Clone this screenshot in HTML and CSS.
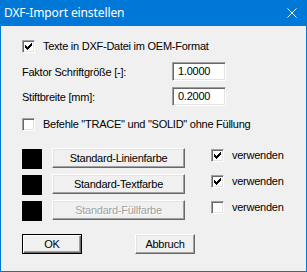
FILE: index.html
```html
<!DOCTYPE html>
<html>
<head>
<meta charset="utf-8">
<link rel="stylesheet" href="styles.css">
</head>
<body>
<div class="window">
  <div class="titlebar">
    <span class="title">DXF-Import einstellen</span>
    <svg class="close" width="10" height="10" viewBox="0 0 10 10"><path d="M0.5 0.5 L9.5 9.5 M9.5 0.5 L0.5 9.5" stroke="#fff" stroke-width="1" fill="none"/></svg>
  </div>
  <div class="body">
    <div class="check row-oem">
      <span class="box"><svg width="13" height="13" viewBox="0 0 13 13" shape-rendering="crispEdges"><path d="M3 5h1v3h-1z M4 6h1v3h-1z M5 7h1v3h-1z M6 6h1v3h-1z M7 5h1v3h-1z M8 4h1v3h-1z M9 3h1v3h-1z" fill="#000"/></svg></span>
      <span>Texte in DXF-Datei im OEM-Format</span>
    </div>
    <div class="field row-f1">
      <span class="label">Faktor Schriftgröße [-]:</span>
      <span class="input">1.0000</span>
    </div>
    <div class="field row-f2">
      <span class="label">Stiftbreite [mm]:</span>
      <span class="input">0.2000</span>
    </div>
    <div class="check row-trace">
      <span class="box"></span>
      <span>Befehle "TRACE" und "SOLID" ohne Füllung</span>
    </div>
    <div class="colors">
      <div class="color-row">
        <span class="swatch"></span>
        <span class="btn wide">Standard-Linienfarbe</span>
        <div class="check use">
          <span class="box"><svg width="13" height="13" viewBox="0 0 13 13" shape-rendering="crispEdges"><path d="M3 5h1v3h-1z M4 6h1v3h-1z M5 7h1v3h-1z M6 6h1v3h-1z M7 5h1v3h-1z M8 4h1v3h-1z M9 3h1v3h-1z" fill="#000"/></svg></span>
          <span>verwenden</span>
        </div>
      </div>
      <div class="color-row">
        <span class="swatch"></span>
        <span class="btn wide">Standard-Textfarbe</span>
        <div class="check use">
          <span class="box"><svg width="13" height="13" viewBox="0 0 13 13" shape-rendering="crispEdges"><path d="M3 5h1v3h-1z M4 6h1v3h-1z M5 7h1v3h-1z M6 6h1v3h-1z M7 5h1v3h-1z M8 4h1v3h-1z M9 3h1v3h-1z" fill="#000"/></svg></span>
          <span>verwenden</span>
        </div>
      </div>
      <div class="color-row">
        <span class="swatch"></span>
        <span class="btn wide disabled">Standard-Füllfarbe</span>
        <div class="check use">
          <span class="box"></span>
          <span>verwenden</span>
        </div>
      </div>
    </div>
    <div class="actions">
      <span class="btn small default">OK</span>
      <span class="btn small">Abbruch</span>
    </div>
  </div>
</div>
</body>
</html>
```
FILE: styles.css
```css
* { box-sizing: border-box; }
html, body { margin: 0; padding: 0; }
body {
  width: 307px;
  height: 272px;
  overflow: hidden;
  background: #f0f0f0;
  font-family: "Liberation Sans", Arial, sans-serif;
  font-size: 11px;
  letter-spacing: -0.25px;
  color: #000;
}
.window {
  width: 307px;
  height: 272px;
  border: 1px solid #0078d7;
  border-top: none;
  background: #f0f0f0;
  display: flex;
  flex-direction: column;
}
.titlebar {
  height: 26px;
  margin: 0 -1px;
  background: #0078d7;
  display: flex;
  align-items: center;
  justify-content: space-between;
  padding: 0 10px 0 4px;
  flex-shrink: 0;
}
.title {
  color: #fff;
  font-family: "Noto Sans", "Open Sans", sans-serif;
  font-size: 12px;
  letter-spacing: -0.1px;
  line-height: 26px;
}
.close { display: block; }
.body {
  padding-left: 21px;
  display: flex;
  flex-direction: column;
}
.check {
  display: flex;
  align-items: center;
  height: 13px;
  line-height: 13px;
  gap: 8px;
}
.box {
  width: 13px;
  height: 13px;
  flex-shrink: 0;
  background: #fff;
  border: 1px solid;
  border-color: #a0a0a0 #fff #fff #a0a0a0;
  box-shadow: inset 1px 1px #696969, inset -1px -1px #e3e3e3;
  position: relative;
}
.box svg {
  position: absolute;
  left: -1px;
  top: -1px;
}
.row-oem { margin-top: 14px; }
.field {
  display: flex;
  align-items: center;
  height: 19px;
}
.label { width: 150px; }
.input {
  width: 54px;
  height: 19px;
  background: #fff;
  border: 1px solid;
  border-color: #a0a0a0 #fff #fff #a0a0a0;
  box-shadow: inset 1px 1px #696969, inset -1px -1px #e3e3e3;
  padding-left: 5px;
  line-height: 17px;
}
.row-f1 { margin-top: 9px; }
.row-f2 { margin-top: 6px; }
.row-trace { margin-top: 12px; }
.colors {
  margin-top: 17px;
  display: flex;
  flex-direction: column;
  gap: 6px;
}
.color-row {
  display: flex;
  align-items: flex-start;
  height: 20px;
}
.swatch {
  width: 20px;
  height: 20px;
  margin-top: 1px;
  background: #000;
}
.btn {
  display: flex;
  align-items: center;
  justify-content: center;
  height: 20px;
  background: #f0f0f0;
  border: 1px solid;
  border-color: #fff #696969 #696969 #fff;
  box-shadow: inset -1px -1px #a0a0a0, inset 1px 1px #e3e3e3;
  padding-bottom: 1px;
}
.btn.wide {
  width: 133px;
  margin-left: 10px;
}
.btn.disabled {
  color: #a0a0a0;
  text-shadow: 1px 1px #fff;
}
.use {
  margin-left: 26px;
  margin-top: 1px;
}
.actions {
  margin-top: 14px;
  display: flex;
  gap: 53px;
}
.btn.small { width: 60px; }
.btn.default {
  border-color: #000;
  box-shadow: inset 1px 1px #fff, inset -1px -1px #696969, inset -2px -2px #a0a0a0;
}
```
